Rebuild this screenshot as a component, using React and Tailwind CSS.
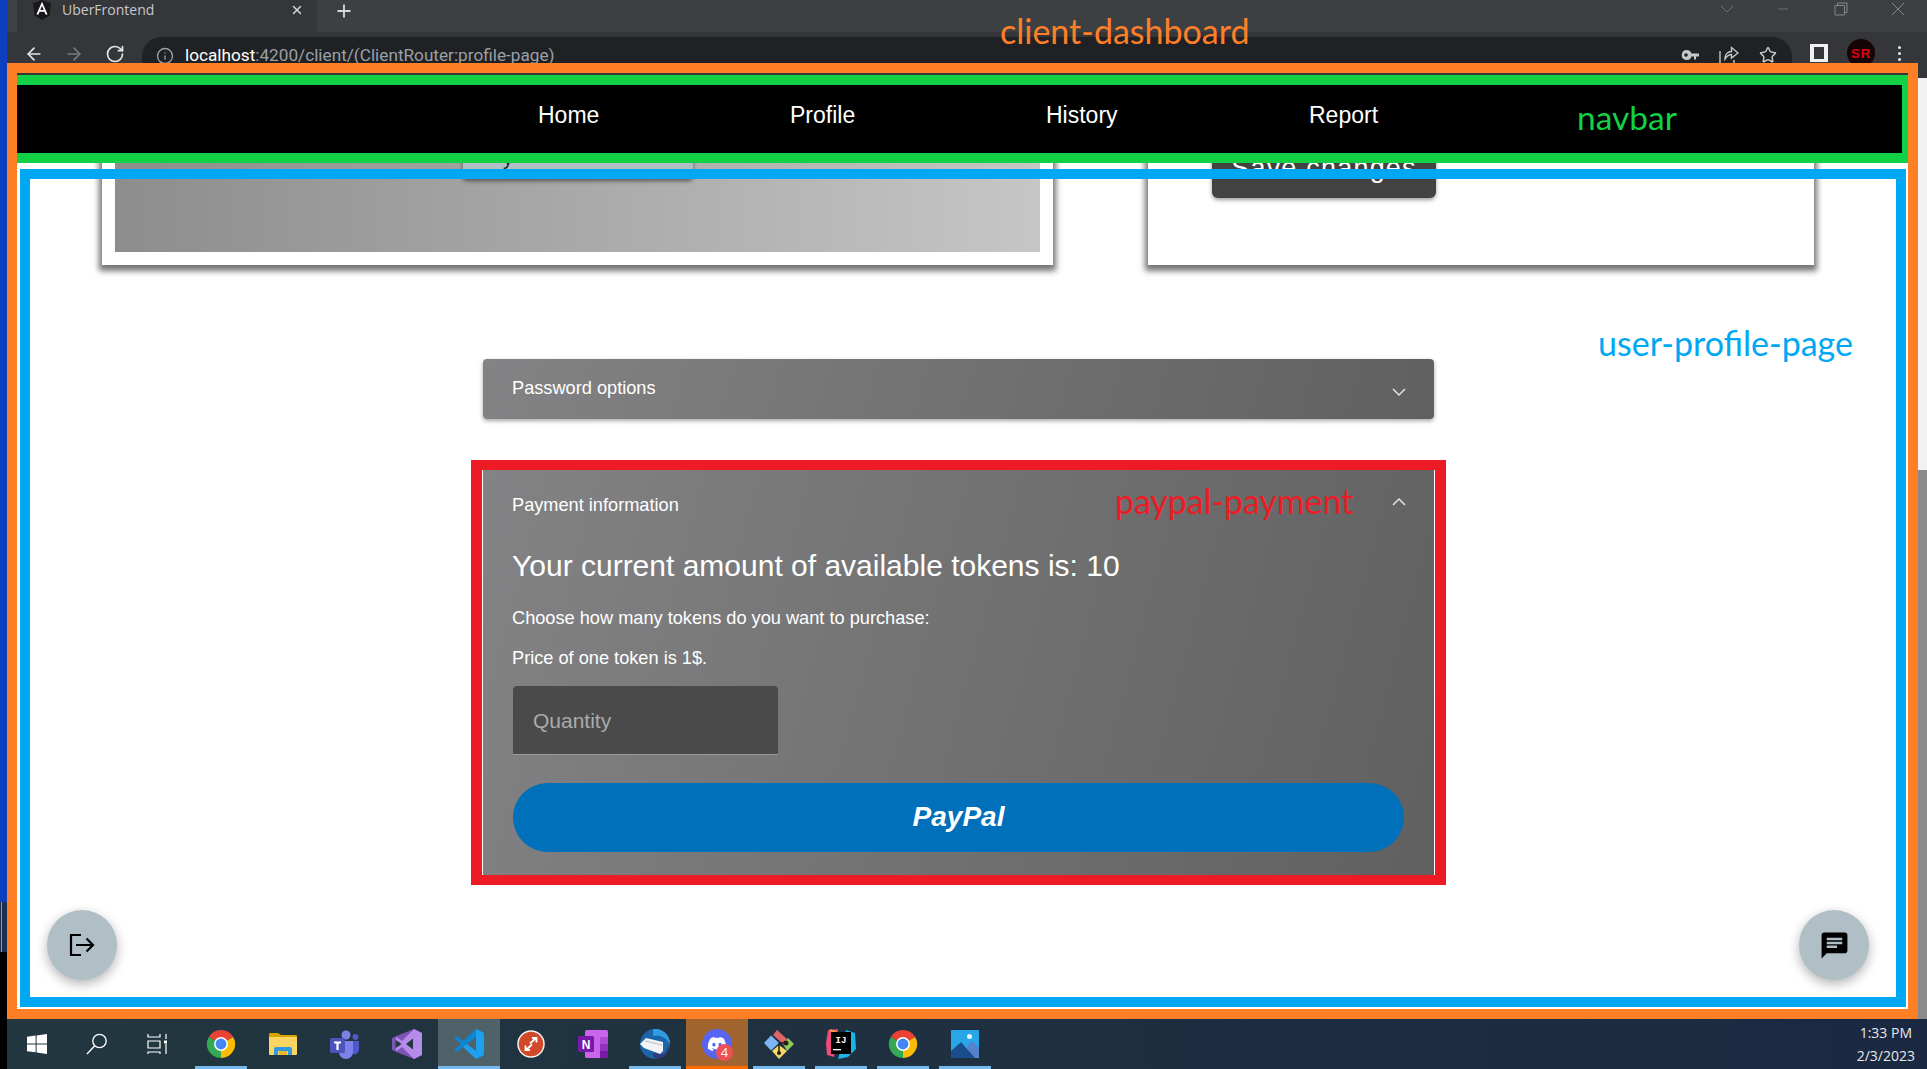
import React from "react";
import { ArrowLeft, ArrowRight, RotateCw, Info, Star, X, Plus, Minus } from "lucide-react";
import { FaDiscord } from "react-icons/fa";

const ChromeLogo = () => (
  <svg width="30" height="30" viewBox="0 0 32 32">
    <path d="M3 8.5A15 15 0 0 1 29 8.5L16 16Z" fill="#ea4335" />
    <path d="M29 8.5A15 15 0 0 1 16 31L16 16Z" fill="#fbbc04" />
    <path d="M16 31A15 15 0 0 1 3 8.5L16 16Z" fill="#34a853" />
    <circle cx="16" cy="16" r="7.4" fill="#fff" />
    <circle cx="16" cy="16" r="5.8" fill="#4285f4" />
  </svg>
);

const WindowsLogo = () => (
  <svg width="20" height="20" viewBox="0 0 20 20" fill="#fff">
    <path d="M0 2.8 8.6 1.6V9.4H0ZM9.6 1.4 20 0V9.4H9.6ZM0 10.4H8.6V18.3L0 17.2ZM9.6 10.4H20V20L9.6 18.5Z" />
  </svg>
);

const SearchIcon = () => (
  <svg width="22" height="22" viewBox="0 0 22 22" fill="none" stroke="#fff" strokeWidth="1.3">
    <circle cx="13.5" cy="8" r="6.7" />
    <path d="M8.7 12.8 1 21" />
  </svg>
);

const TaskView = () => (
  <svg width="20" height="20" viewBox="0 0 20 20" fill="none" stroke="#fff" strokeWidth="1.2">
    <path d="M1 0V3H13V0M1 7H13V14H1ZM1 20V18H13V20M19 0V5M19 10V20" />
    <rect x="17" y="6.5" width="3" height="3" fill="#fff" stroke="none" />
  </svg>
);

const FolderIcon = () => (
  <svg width="28" height="24" viewBox="0 0 28 24">
    <path d="M0 2a1 1 0 0 1 1-1h8l3 2h15a1 1 0 0 1 1 1v2H0Z" fill="#d9a300" />
    <path d="M0 5h27a1 1 0 0 1 1 1v16a1 1 0 0 1-1 1H1a1 1 0 0 1-1-1Z" fill="#fcd462" />
    <path d="M5 23v-6a2 2 0 0 1 2-2h14a2 2 0 0 1 2 2v6h-4v-4H9v4Z" fill="#2f9bdc" />
    <rect x="10" y="19" width="8" height="4" fill="#e9b62f" />
  </svg>
);

const TeamsIcon = () => (
  <svg width="30" height="30" viewBox="0 0 30 30">
    <circle cx="16" cy="6" r="4.5" fill="#7b83eb" />
    <circle cx="25.5" cy="8" r="3" fill="#5059c9" />
    <path d="M20 12h9v9a4.5 4.5 0 0 1-7 3.5Z" fill="#5059c9" />
    <path d="M9 12h14v11a7 7 0 0 1-14 0Z" fill="#7b83eb" />
    <rect x="0" y="9" width="15" height="15" rx="1.5" fill="#4b53bc" />
    <path d="M4 12.5h7v2H8.6V21H6.4V14.5H4Z" fill="#fff" />
  </svg>
);

const VSIcon = () => (
  <svg width="30" height="30" viewBox="0 0 30 30">
    <path d="M0 9 7 6 22 0 30 4V26L22 30 7 24 0 21Z" fill="#7a55b5" />
    <path d="M22 0 30 4V26L22 30 10 18 4 22.5V7.5L10 12Z" fill="#b78bea" />
    <path d="M21 9.5V20.500L14 15Z" fill="#243840" />
    <path d="M3.500 11 7 13 9.500 15 7 17 3.500 19Z" fill="#243840" />
  </svg>
);

const VSCodeIcon = () => (
  <svg width="30" height="30" viewBox="0 0 30 30">
    <path d="M22 0 30 4V26L22 30 22 8 9 18 3 23 0 21 7 15 0 9 3 7 9 12Z" fill="#0a86d4" />
    <path d="M22 0 30 4V26L22 30 9 18 22 8Z" fill="#1da1ee" />
    <path d="M22 8V22L13 15Z" fill="#4f6269" />
  </svg>
);

const RdpIcon = () => (
  <svg width="28" height="28" viewBox="0 0 28 28" fill="none">
    <circle cx="14" cy="14" r="13" fill="#d1492a" stroke="#f1f1f1" strokeWidth="1.5" />
    <path d="M13 13.500 19 8M15 8H19.500V12.500M15 14.500 9 20M8.500 15.500V20H13" stroke="#fff" strokeWidth="1.800" />
  </svg>
);

const OneNoteIcon = () => (
  <svg width="30" height="28" viewBox="0 0 30 28">
    <rect x="7" y="0" width="23" height="28" rx="1.500" fill="#ca64ea" />
    <rect x="22" y="7" width="8" height="7" fill="#ae4bd5" />
    <rect x="22" y="14" width="8" height="7" fill="#9332bf" />
    <rect x="22" y="21" width="8" height="7" fill="#7719aa" />
    <rect x="0" y="6" width="16" height="16" rx="1.500" fill="#7719aa" />
    <text x="8" y="19" textAnchor="middle" fontSize="12" fontWeight="700" fill="#fff" fontFamily="'Liberation Sans', sans-serif">N</text>
  </svg>
);

const ThunderbirdIcon = () => (
  <svg width="30" height="30" viewBox="0 0 30 30">
    <circle cx="15" cy="15" r="15" fill="#1a66a8" />
    <path d="M13 0A15 15 0 0 1 30 15C26 8 20 6 13 7Z" fill="#2f9be0" />
    <path d="M15 30A15 15 0 0 0 30 15L24 25 12 24Z" fill="#2c3c7e" />
    <path d="M0 15 6 9 23 13 23 22 20 25 4 19Z" fill="#f3f3f3" />
    <path d="M5 12 22 16" stroke="#9fb1c2" strokeWidth="0.8" />
  </svg>
);

const GitIcon = () => (
  <svg width="30" height="30" viewBox="0 0 30 30">
    <path d="M15 15 7 7.500 0 15 7 22.500Z" fill="#7db6f2" transform="translate(0 -1)" />
    <path d="M9 6 13 1 23 10 19 15Z" fill="#e2626a" />
    <path d="M19 15 24 9 30 15 23 22Z" fill="#92c957" />
    <path d="M8 22 15 16 23 22 15 30Z" fill="#f4d765" />
    <path d="M15 14V24M15 14 21 14" stroke="#222" strokeWidth="1.500" fill="none" />
    <circle cx="15" cy="24" r="2" fill="#222" />
    <circle cx="22" cy="14" r="2.500" fill="#222" />
  </svg>
);

const IJIcon = () => (
  <svg width="30" height="30" viewBox="0 0 30 30">
    <path d="M2 1 12 0 8 28 1 26 0 14Z" fill="#f2487a" />
    <path d="M4 0 12 3 6 10Z" fill="#f9a13c" />
    <path d="M20 1 29 4 30 20 22 28 12 30Z" fill="#19b5e8" />
    <rect x="5" y="3" width="20" height="22" fill="#000" />
    <text x="15" y="14" textAnchor="middle" fontSize="9" fontWeight="700" fill="#fff" fontFamily="'Liberation Mono', monospace">IJ</text>
    <rect x="7" y="20" width="8" height="1.300" fill="#fff" />
  </svg>
);

const PhotosIcon = () => (
  <svg width="28" height="28" viewBox="0 0 28 28">
    <rect width="28" height="28" rx="1" fill="#27a7e8" />
    <circle cx="18.500" cy="6.500" r="2.500" fill="#e7f5fd" />
    <path d="M16 16 21 11 28 18V28H20Z" fill="#5682cc" />
    <path d="M0 21 10 12 24 28H0Z" fill="#1a4d8c" />
  </svg>
);

const AngularLogo = () => (
  <svg width="18" height="20" viewBox="0 0 18 20">
    <path d="M9 0 18 3.200 16.500 15.500 9 20 1.500 15.500 0 3.200Z" fill="#16181b" />
    <path d="M9 1.800 3.400 14.600H5.500L6.600 11.700H11.400L12.500 14.600H14.600ZM7.300 10 9 5.800 10.700 10Z" fill="#fff" />
  </svg>
);

const KeyIcon = () => (
  <svg width="18" height="12" viewBox="0 0 18 12" fill="#c4c7c5">
    <path d="M5.500 1A5 5 0 1 0 10.500 7.500H13V10.500H15V7.500H18V4.500H10.500A5 5 0 0 0 5.500 1ZM5 4.200A1.800 1.800 0 1 1 5 7.800 1.800 1.800 0 0 1 5 4.200Z" />
  </svg>
);

const ShareIcon = () => (
  <svg width="20" height="20" viewBox="0 0 20 20" fill="none" stroke="#c4c7c5" strokeWidth="1.400">
    <path d="M1 6V19H15V15" />
    <path d="M6 14C6 9 9 6.500 12.500 6.500V2.500L19 8 12.500 13V9.500C10 9.500 8 11 6 14Z" />
  </svg>
);

const Slot = ({ children, bar, active, warn }) => (
  <div
    className={
      "relative flex h-full w-[62px] shrink-0 items-center justify-center " +
      (active ? "bg-[#4f6269] " : "") +
      (warn ? "bg-[#a1652f] " : "")
    }
  >
    <span className="-mt-[1px] flex">{children}</span>
    {bar && <span className="absolute bottom-0 left-[5px] right-[5px] h-[3px] bg-[#76b9ed]" />}
    {active && <span className="absolute bottom-0 left-0 right-0 h-[3px] bg-[#76b9ed]" />}
    {warn && <span className="absolute bottom-0 left-0 right-0 h-[3px] bg-[#ff6a00]" />}
  </div>
);

const Chevron = ({ up }) => (
  <svg width="14" height="9" viewBox="0 0 14 9" fill="none" stroke="#e4e4e4" strokeWidth="1.500">
    <path d={up ? "M1 8 7 2 13 8" : "M1 1 7 7 13 1"} />
  </svg>
);

function BrowserChrome() {
  return (
    <div className="h-[63px] shrink-0 overflow-hidden bg-[#35363a] font-['Open_Sans',sans-serif]">
      <div className="flex h-[32px] bg-[#3d4043]">
        <div className="w-[10px] rounded-bl-lg bg-[#3f4245]" />
        <div className="flex h-[32px] w-[300px] items-center bg-[#35363a] pl-[16px] pb-[12px] pr-[13px]">
          <AngularLogo />
          <span className="ml-[11px] text-[14px] leading-none text-[#c6c8ca]">UberFrontend</span>
          <X className="ml-auto text-[#d2d4d6]" size={14} strokeWidth={2.5} />
        </div>
        <div className="flex flex-1 items-start pl-[17px] pt-[1px]">
          <Plus className="text-[#d6d8da]" size={20} strokeWidth={2.2} />
          <div className="ml-auto mr-[22px] flex items-center gap-[39px] text-[#83878a]">
            <svg width="14" height="8" viewBox="0 0 14 8" fill="none" stroke="#6f7376" strokeWidth="1"><path d="M1 1 7 7 13 1" /></svg>
            <Minus size={16} strokeWidth={1} className="ml-[2px] mr-[4px]" />
            <svg width="14" height="14" viewBox="0 0 14 14" fill="none" stroke="#83878a" strokeWidth="1"><path d="M1 3.500H10.500V13H1ZM3.500 3.500V1H13V10.500H10.500" /></svg>
            <svg width="14" height="14" viewBox="0 0 14 14" fill="none" stroke="#83878a" strokeWidth="1" className="ml-[4px]"><path d="M1 1 13 13M13 1 1 13" /></svg>
          </div>
        </div>
      </div>
      <div className="flex h-[45px] items-start pt-[5px]">
        <div className="mt-[4px] flex h-[26px] w-[135px] items-center pl-[17px]">
          <ArrowLeft className="text-[#e4e6e8]" size={20} strokeWidth={2} />
          <ArrowRight className="ml-[20px] text-[#77797c]" size={20} strokeWidth={2} />
          <RotateCw className="ml-[21px] text-[#e4e6e8]" size={20} strokeWidth={2} />
        </div>
        <div className="flex h-[40px] w-[1650px] rounded-t-[20px] bg-[#202124] pl-[14px] pt-[10px]">
          <Info className="text-[#9aa0a6]" size={18} strokeWidth={1.8} />
          <span className="ml-[11px] font-['Roboto',sans-serif] text-[17.2px] leading-none text-[#9aa0a6]">
            <span className="text-white">localhost</span>:4200/client/(ClientRouter:profile-page)
          </span>
          <span className="ml-auto mr-[15px] -mt-[2px] flex items-center gap-[20px] self-start">
            <KeyIcon />
            <ShareIcon />
            <Star className="text-[#c4c7c5]" size={18} strokeWidth={2} />
          </span>
        </div>
        <div className="mt-[3px] flex h-[26px] flex-1 items-center pl-[18px]">
          <span className="h-[18px] w-[18px] border-[3px] border-x-[4px] border-[#f1f1f1] bg-[#35363a]" />
          <span className="ml-[19px] flex h-[28px] w-[28px] items-center justify-center rounded-full bg-[#160406] font-['Liberation_Sans',sans-serif] text-[13px] font-bold leading-none tracking-[1px] text-[#e3000f]">SR</span>
          <span className="ml-[23px] flex flex-col gap-[3px]">
            <span className="h-[3px] w-[3px] rounded-full bg-[#e8eaed]" />
            <span className="h-[3px] w-[3px] rounded-full bg-[#e8eaed]" />
            <span className="h-[3px] w-[3px] rounded-full bg-[#e8eaed]" />
          </span>
        </div>
      </div>
    </div>
  );
}

function Navbar() {
  return (
    <div className="relative mt-[2px] flex h-[88px] shrink-0 items-center border-y-[10px] border-r-[6px] border-[#13d145] bg-black pl-[521px] pb-[8px] text-[23px] leading-none text-white">
      <a className="w-[252px]">Home</a>
      <a className="w-[256px]">Profile</a>
      <a className="w-[263px]">History</a>
      <a>Report</a>
      <span className="absolute left-[1560px] top-[16px] font-['Lato',sans-serif] text-[33.5px] leading-none text-[#13d145]">navbar</span>
    </div>
  );
}

function ScrolledContent() {
  return (
    <div className="-mt-[135px]">
      <div className="flex pl-[85px]">
        <div className="flex h-[237px] w-[951px] flex-col bg-white p-[13px] shadow-[0_3px_6px_3px_rgba(0,0,0,0.55)]">
          <div className="relative flex-1 bg-gradient-to-r from-[#8d8d8d] to-[#c6c6c6]">
            <button className="absolute bottom-[73px] left-[348px] flex h-[60px] w-[230px] items-end rounded-b bg-[#b0bec5] pb-[11px] pl-[40px] text-[20px] leading-none text-[#222] shadow-[0_2px_4px_rgba(0,0,0,0.5)]">
              y
            </button>
          </div>
        </div>
        <div className="ml-[95px] flex h-[237px] w-[666px] flex-col justify-end bg-white pb-[67px] pl-[64px] shadow-[0_3px_6px_3px_rgba(0,0,0,0.55)]">
          <button className="flex h-[60px] w-[224px] items-center justify-center rounded-[6px] bg-[#424242] text-[27px] tracking-[1.2px] text-white shadow-[0_2px_4px_rgba(0,0,0,0.4)]">
            Save changes
          </button>
        </div>
      </div>

      <div className="ml-[466px] mt-[94px] flex h-[60px] w-[951px] items-center justify-between rounded bg-[linear-gradient(105deg,#838385,#606060)] pl-[29px] pr-[28px] text-white shadow-[0_2px_4px_rgba(0,0,0,0.35)]">
        <span className="-mt-[2px] text-[18.2px] leading-none">Password options</span>
        <span className="mt-[7px] flex"><Chevron /></span>
      </div>

      <div className="relative ml-[454px] mt-[41px] w-[975px] border-y-[10px] border-x-[11px] border-[#ed1c24] bg-white px-[1px]">
        <div className="bg-[linear-gradient(105deg,#838385,#606060)] pl-[29px] pr-[30px] pb-[23px] text-white">
          <div className="flex h-[70px] items-center justify-between">
            <span className="text-[18.2px] leading-none">Payment information</span>
            <span className="-mr-[2px] -mt-[8px] flex"><Chevron up /></span>
          </div>
          <h2 className="flex h-[52px] items-center text-[30px] font-normal leading-none">Your current amount of available tokens is: 10</h2>
          <p className="mt-[13px] flex h-[26px] items-center text-[18.2px] leading-none">Choose how many tokens do you want to purchase:</p>
          <p className="mt-[14px] flex h-[26px] items-center text-[18.2px] leading-none">Price of one token is 1$.</p>
          <div className="ml-[1px] mt-[15px] flex h-[69px] w-[265px] items-center rounded-t border-b border-[#9a9a9a] bg-[#4a4a4a] pl-[20px] text-[21px] leading-none text-[#ababab]">
            Quantity
          </div>
          <button className="ml-[1px] mt-[28px] block h-[69px] w-[891px] rounded-full bg-[#0070ba] pb-[2px] text-[28px] font-bold italic leading-none text-white">
            PayPal
          </button>
        </div>
        <span className="absolute left-[633px] top-[15px] font-['Lato',sans-serif] text-[33.8px] leading-none text-[#ed1c24]">paypal-payment</span>
      </div>
    </div>
  );
}

function Main() {
  return (
    <div className="relative flex-1 overflow-hidden bg-white">
      <ScrolledContent />
      <div className="pointer-events-none absolute bottom-[2px] left-[3px] right-[2px] top-[6px] border-[10px] border-[#00a8f3]" />
      <span className="absolute left-[1581px] top-[163px] font-['Lato',sans-serif] text-[34px] leading-none text-[#00a8f3]">user-profile-page</span>
      <button className="absolute left-[30px] top-[747px] flex h-[70px] w-[70px] items-center justify-center rounded-full bg-[#b0bec5] shadow-[0_4px_12px_rgba(0,0,0,0.3)]">
        <svg width="26" height="24" viewBox="0 0 26 24" fill="none" stroke="#000" strokeWidth="2.200">
          <path d="M12 2H2V22H12M7 12H24M17.500 5.500 24 12 17.500 18.500" />
        </svg>
      </button>
      <button className="absolute left-[1782px] top-[747px] flex h-[70px] w-[70px] items-center justify-center rounded-full bg-[#b0bec5] shadow-[0_4px_12px_rgba(0,0,0,0.3)]">
        <svg width="31" height="31" viewBox="0 0 24 24" fill="#000">
          <path d="M20 2H4c-1.100 0-1.990.900-1.990 2L2 22l4-4h14c1.100 0 2-.900 2-2V4c0-1.100-.900-2-2-2zM6 9h12v2H6V9zm8 5H6v-2h8v2zm4-6H6V6h12v2z" />
        </svg>
      </button>
    </div>
  );
}

function Taskbar() {
  return (
    <div className="flex h-[50px] flex-1 items-center bg-gradient-to-r from-[#22373f] to-[#1b2842]">
      <div className="flex h-full w-[60px] items-center justify-center"><WindowsLogo /></div>
      <div className="flex h-full w-[60px] items-center justify-center"><SearchIcon /></div>
      <div className="flex h-full w-[63px] items-center justify-center pr-[4px]"><TaskView /></div>
      <Slot bar><ChromeLogo /></Slot>
      <Slot><FolderIcon /></Slot>
      <Slot><TeamsIcon /></Slot>
      <Slot><VSIcon /></Slot>
      <Slot active><VSCodeIcon /></Slot>
      <Slot><RdpIcon /></Slot>
      <Slot><OneNoteIcon /></Slot>
      <Slot bar><ThunderbirdIcon /></Slot>
      <Slot warn>
        <span className="relative flex h-[30px] w-[30px] items-center justify-center rounded-full bg-[#5865f2]">
          <FaDiscord className="text-white" size={20} />
          <span className="absolute -bottom-[2px] -right-[1px] flex h-[17px] w-[17px] items-center justify-center rounded-full bg-[#ed4f56] font-['Open_Sans',sans-serif] text-[13px] leading-none text-white">4</span>
        </span>
      </Slot>
      <Slot bar><GitIcon /></Slot>
      <Slot bar><IJIcon /></Slot>
      <Slot bar><ChromeLogo /></Slot>
      <Slot bar><PhotosIcon /></Slot>
      <div className="ml-auto mr-[12px] flex flex-col items-center gap-[5px] font-['Open_Sans',sans-serif] text-[14px] leading-[18px] text-[#e6e9ed]">
        <span>1:33 PM</span>
        <span>2/3/2023</span>
      </div>
    </div>
  );
}

export default function App() {
  return (
    <div className="flex h-[1069px] w-[1927px] overflow-hidden bg-black font-['Liberation_Sans',sans-serif]">
      <div className="flex w-[7px] shrink-0 flex-col">
        <div className="h-[902px] bg-[#0b3fbf]" />
        <div className="h-[50px] border-l border-r-[5px] border-[#1c2f4f] bg-[#8b97ad]" />
        <div className="flex-1 bg-black" />
      </div>
      <div className="flex flex-1 flex-col">
        <BrowserChrome />
        <div className="flex h-[956px] shrink-0">
          <div className="relative flex flex-1 flex-col border-[10px] border-[#ff7f27] bg-[#35363a]">
            <Navbar />
            <Main />
            <span className="absolute left-[983px] top-[-59px] font-['Lato',sans-serif] text-[34px] leading-none text-[#ff7f27]">client-dashboard</span>
          </div>
          <div className="flex w-[9px] shrink-0 flex-col bg-[#35363a]">
            <div className="mt-[15px] h-[392px] bg-[#f1f1f1]" />
            <div className="flex-1 bg-[#8a8a8a]" />
          </div>
        </div>
        <Taskbar />
      </div>
    </div>
  );
}
